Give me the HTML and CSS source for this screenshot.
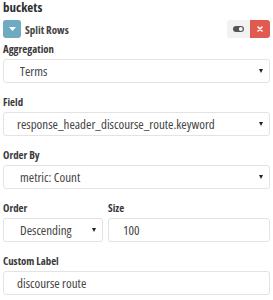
FILE: index.html
```html
<!DOCTYPE html>
<html lang="en">
<head>
    <meta charset="UTF-8">
    <title>buckets</title>
    <link rel="stylesheet" href="styles.css">
</head>
<body>

<div class="panel">
    <div class="panel-title">buckets</div>

    <div class="agg-header">
        <button class="btn-toggle" aria-label="collapse">
            <svg width="7" height="4" viewBox="0 0 7 4"><path d="M0 0h7L3.5 4z" fill="#fff"/></svg>
        </button>
        <span class="agg-name">Split Rows</span>
        <div class="agg-actions">
            <button class="btn-grey" aria-label="disable">
                <svg width="11" height="6" viewBox="0 0 11 6">
                    <rect x="0" y="0" width="11" height="6" rx="3" fill="#555"/>
                    <circle cx="7.8" cy="3" r="2" fill="#f3f3f3"/>
                </svg>
            </button>
            <button class="btn-danger" aria-label="remove">
                <svg width="6" height="6" viewBox="0 0 6 6"><path d="M1 1l4 4M5 1l-4 4" stroke="#fff" stroke-width="1.6" stroke-linecap="round"/></svg>
            </button>
        </div>
    </div>

    <div class="form-group first">
        <label class="form-label">Aggregation</label>
        <div class="select">
            <span class="select-text">Terms</span>
            <span class="caret"></span>
        </div>
    </div>

    <div class="form-group">
        <label class="form-label">Field</label>
        <div class="select select-field">
            <span class="select-text">response_header_discourse_route.keyword</span>
            <span class="caret"></span>
        </div>
    </div>

    <div class="form-group">
        <label class="form-label">Order By</label>
        <div class="select">
            <span class="select-text">metric: Count</span>
            <span class="caret"></span>
        </div>
    </div>

    <div class="form-row">
        <div class="form-group col-order">
            <label class="form-label">Order</label>
            <div class="select">
                <span class="select-text clip">Descending</span>
                <span class="caret"></span>
            </div>
        </div>
        <div class="form-group col-size">
            <label class="form-label">Size</label>
            <div class="input">100</div>
        </div>
    </div>

    <div class="form-group">
        <label class="form-label">Custom Label</label>
        <div class="input">discourse route</div>
    </div>
</div>

</body>
</html>
```

FILE: styles.css
```css
body {
    margin: 0;
    font-family: "Open Sans", "Liberation Sans", sans-serif;
    color: #333;
    background: #fff;
}
.panel {
    padding: 0 3px;
}
.panel-title {
    font-size: 13px;
    font-stretch: 84%;
    font-weight: 700;
    line-height: 15px;
    color: #2d2d2d;
}
.agg-header {
    display: flex;
    align-items: center;
    margin-top: 5px;
    height: 18px;
}
.btn-toggle {
    width: 18px;
    height: 18px;
    border: none;
    border-radius: 3px;
    background: #6eabc0;
    padding: 0;
    display: flex;
    align-items: center;
    justify-content: center;
}
.agg-name {
    margin-left: 4px;
    font-size: 11px;
    font-stretch: 84%;
    font-weight: 700;
    color: #444;
}
.agg-actions {
    margin-left: auto;
    display: flex;
}
.btn-grey,
.btn-danger {
    height: 18px;
    border: none;
    padding: 0;
    display: flex;
    align-items: center;
    justify-content: center;
}
.btn-grey {
    width: 23px;
    border-radius: 3px 0 0 3px;
    background: #f2f2f2;
}
.btn-danger {
    width: 20px;
    border-radius: 0 3px 3px 0;
    background: #e05a4e;
}
.form-group {
    margin-top: 12px;
}
.form-group.first {
    margin-top: 4px;
}
.form-label {
    display: block;
    font-size: 10.8px;
    font-stretch: 81%;
    font-weight: 700;
    line-height: 14px;
    margin-bottom: 3px;
    color: #3a3a3a;
}
.select,
.input {
    box-sizing: border-box;
    height: 24px;
    border: 1px solid #e3e3e3;
    border-radius: 3px;
    display: flex;
    align-items: center;
    padding-left: 16px;
    padding-right: 6px;
    font-size: 13px;
    font-stretch: 82%;
    color: #444;
}
.select-field,
.input {
    padding-left: 13px;
}
.select-text {
    flex: 1;
    white-space: nowrap;
    overflow: hidden;
}
.clip {
    flex: none;
    width: 58px;
}
.caret {
    margin-left: auto;
    width: 0;
    height: 0;
    border-left: 2.5px solid transparent;
    border-right: 2.5px solid transparent;
    border-top: 4px solid #222;
}
.form-row {
    display: flex;
    gap: 5px;
    margin-bottom: 1px;
}
.col-order {
    width: 100px;
}
.col-size {
    flex: 1;
}
.col-size .input {
    padding-left: 14px;
}
```
